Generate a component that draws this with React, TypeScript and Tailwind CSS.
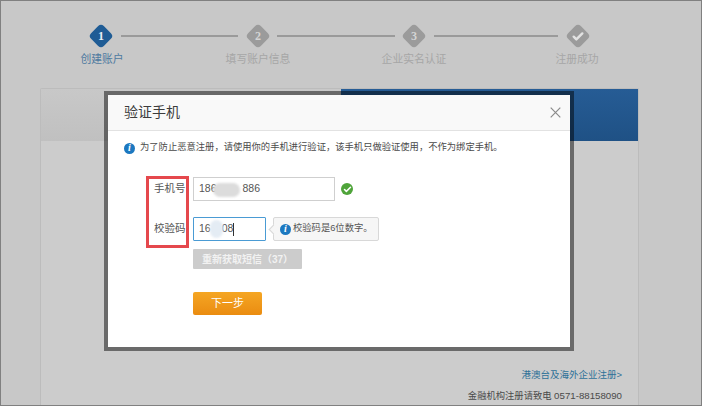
import React from 'react';
import { Check } from 'lucide-react';

const FONT = "font-['Liberation_Sans','Noto_Sans_CJK_SC',sans-serif]";

const steps = [
  { label: '创建账户', active: true, left: 'left-[79px]', width: 'w-[44px]' },
  { label: '填写账户信息', active: false, left: 'left-[224px]', width: 'w-[66px]' },
  { label: '企业实名认证', active: false, left: 'left-[380px]', width: 'w-[66px]' },
  { label: '注册成功', active: false, left: 'left-[554px]', width: 'w-[44px]' },
];

function Diamond({ mark, active }: { mark: string; active: boolean }) {
  return (
    <div className={`w-[18px] h-[18px] shrink-0 rotate-45 rounded-[4px] flex items-center justify-center ${active ? 'bg-[#1f5c95]' : 'bg-[#9b9b9b]'}`}>
      <div className="-rotate-45 flex items-center justify-center">
        {mark === 'check' ? (
          <Check className="w-[13px] h-[13px] text-[#e2e2e2]" strokeWidth={4.5} />
        ) : (
          <span className={`text-[12px] font-bold leading-none font-['Liberation_Serif',serif] ${active ? 'text-[#e8eef4]' : 'text-[#d4d4d4]'}`}>{mark}</span>
        )}
      </div>
    </div>
  );
}

function Stepper() {
  return (
    <div className="h-[87px] pt-[26px] pl-[91px]">
      <div className="flex items-center h-[18px]">
        <Diamond mark="1" active />
        <div className="w-[117px] h-[2px] bg-[#9a9a9a] mx-[11px] shrink-0" />
        <Diamond mark="2" active={false} />
        <div className="w-[118px] h-[2px] bg-[#9a9a9a] mx-[10px] shrink-0" />
        <Diamond mark="3" active={false} />
        <div className="w-[124px] h-[2px] bg-[#9a9a9a] mx-[11px] shrink-0" />
        <Diamond mark="check" active={false} />
      </div>
      {steps.map((s) => (
        <div
          key={s.label}
          className={`absolute top-[50px] ${s.left} ${s.width} text-center whitespace-nowrap text-[10.8px] leading-[16px] ${s.active ? 'text-[#4f7aa0]' : 'text-[#a6a6a6]'}`}
        >
          {s.label}
        </div>
      ))}
    </div>
  );
}

function InfoIcon() {
  return (
    <span className="w-[11px] h-[11px] rounded-full bg-[#1c78c0] text-white flex items-center justify-center shrink-0 text-[10px] font-bold italic leading-none font-['Liberation_Serif',serif]">
      i
    </span>
  );
}

function Modal() {
  return (
    <div className="absolute left-[103px] top-[90px] w-[470px] h-[260px] border-[4px] border-[rgba(0,0,0,0.48)] bg-white bg-clip-padding">
      <div className="h-[35px] bg-[#f9f9f9] border-b border-[#e2e2e2] flex items-center justify-between pl-[16px] pr-[9px] box-content">
        <span className="text-[14px] text-[#3c3c3c]">验证手机</span>
        <svg width="11" height="11" viewBox="0 0 11 11" className="text-[#8a8a8a]">
          <path d="M.7.7l9.6 9.6M10.3.7L.7 10.3" stroke="currentColor" strokeWidth="1.2" fill="none" />
        </svg>
      </div>

      <div className="pl-[16px] pt-[4px] flex items-center gap-[5px] h-[30px] text-[9.3px] text-[#4a4a4a] whitespace-nowrap">
        <InfoIcon />
        <span>为了防止恶意注册，请使用你的手机进行验证，该手机只做验证使用，不作为绑定手机。</span>
      </div>

      <div className="relative pl-[85px] pt-[16px]">
        {/* red box drawn over the labels */}
        <div className="absolute left-[38px] top-[15px] w-[43px] h-[72px] border-[3px] border-[#e5484d]" />

        <div className="flex items-center h-[24px]">
          <span className="absolute left-[46px] text-[10.5px] text-[#555555]">手机号</span>
          <div className="relative w-[142px] h-[24px] border border-[#cfcfcf] flex items-center pl-[5px] text-[10.5px] text-[#555555]">
            <span>186</span>
            <span className="ml-[26px]">886</span>
            <div className="absolute left-[19px] top-[5px] w-[27px] h-[14px] rounded-[7px] bg-[#dcdcdc] blur-[1px]" />
          </div>
          <span className="ml-[6px] w-[12px] h-[12px] rounded-full bg-[#4fa43a] flex items-center justify-center">
            <Check className="w-[9px] h-[9px] text-white" strokeWidth={4} />
          </span>
        </div>

        <div className="flex items-center h-[24px] mt-[16px]">
          <span className="absolute left-[46px] text-[10.5px] text-[#555555]">校验码</span>
          <div className="relative w-[73px] h-[24px] border border-[#4a9bd4] flex items-center pl-[5px] text-[10.5px] text-[#555555] rounded-[1px]">
            <span>16</span>
            <span className="ml-[11px]">08</span>
            <span className="w-px h-[13px] bg-[#333333]" />
            <div className="absolute left-[16px] top-[2px] w-[13px] h-[18px] rounded-full bg-[#e4ecf4] blur-[1px]" />
          </div>
          <div className="relative ml-[7px] w-[106px] h-[24px] border border-[#d8d8d8] rounded-[2px] bg-[#f6f6f6] flex items-center pl-[6px] gap-[2px] text-[9.3px] text-[#555555] whitespace-nowrap">
            <InfoIcon />
            <span>校验码是6位数字。</span>
            <div className="absolute -left-[4px] top-[8px] w-[7px] h-[7px] rotate-45 bg-[#f6f6f6] border-l border-b border-[#d8d8d8]" />
          </div>
        </div>

        <div className="mt-[8px] w-[109px] h-[20px] bg-[#cccccc] rounded-[1px] flex items-center justify-center text-[10px] font-bold text-[#f2f2f2] whitespace-nowrap">
          重新获取短信（37）
        </div>

        <div className="mt-[23px] w-[69px] h-[23px] rounded-[2px] bg-gradient-to-b from-[#f5a623] to-[#ea8c10] flex items-center justify-center text-[11px] text-white">
          下一步
        </div>
      </div>
    </div>
  );
}

export default function App() {
  return (
    <div className={`${FONT} relative w-[702px] h-[406px] overflow-hidden bg-[#c8c8c8] border border-[#808080]`}>
      <Stepper />

      <div className="ml-[39px] w-[599px] h-[317px] bg-[#cccccc] border-x border-t border-[#bcbcbc] rounded-t-[2px] flex flex-col justify-between">
        <div className="flex h-[52px]">
          <div className="w-[300px] bg-gradient-to-b from-[#c8c8c8] to-[#c0c0c0]" />
          <div className="flex-1 bg-gradient-to-b from-[#265c95] to-[#1f5185]" />
        </div>
        <div className="pr-[16px] pb-[2px] flex flex-col items-end gap-[7px] text-[9.5px] leading-[14px]">
          <span className="text-[#2e7198]">港澳台及海外企业注册&gt;</span>
          <span className="text-[#4a4a4a] text-[9.3px]">
            金融机构注册请致电 <span className="text-[9.7px]">0571-88158090</span>
          </span>
        </div>
      </div>

      <Modal />
    </div>
  );
}
